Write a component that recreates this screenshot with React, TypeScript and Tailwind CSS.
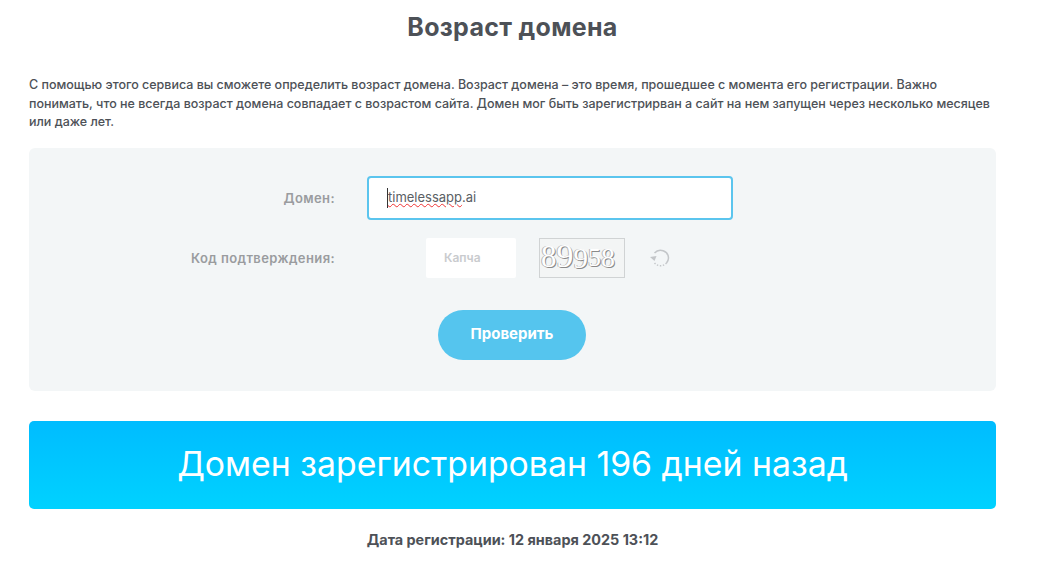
const digits = [
  { c: "8", cls: "text-[31px] -translate-y-[1px]" },
  { c: "9", cls: "text-[34px] -translate-y-[2px]" },
  { c: "9", cls: "text-[29px] translate-y-[1px]" },
  { c: "5", cls: "text-[26px]" },
  { c: "8", cls: "text-[28px]" },
];

export default function App() {
  return (
    <div className="h-[567px] w-[1038px] overflow-hidden bg-white pl-[29px] pr-[42px] font-['Inter',sans-serif] text-[#4d5157]">
      <h1 className="pt-[12px] text-center text-[25px] font-bold leading-[30px] tracking-[0.3px] text-[#4d5157]">Возраст домена</h1>
      <p className="mt-[34px] text-[12.5px] font-medium leading-[18.5px] tracking-[-0.012px]">
        С помощью этого сервиса вы сможете определить возраст домена. Возраст домена – это время, прошедшее с момента его регистрации. Важно<br />
        понимать, что не всегда возраст домена совпадает с возрастом сайта. Домен мог быть зарегистрирван а сайт на нем запущен через несколько месяцев<br />
        или даже лет.
      </p>
      <form className="mt-[16px] flex h-[243px] flex-col rounded-[6px] bg-[#f3f6f7] pt-[28px]">
        <div className="flex h-[45px] items-center">
          <label className="w-[306px] pt-[2px] text-right text-[13px] font-semibold tracking-[0.4px] text-[#9a9c9f]">Домен:</label>
          <div className="ml-[32px] flex h-[44px] w-[366px] items-center rounded-[4px] border-2 border-[#5bc5ee] bg-white pl-[18px] text-[13px] text-[#5a5e64]">
            <span className="border-l border-[#333]"><span className="underline decoration-wavy decoration-[#e33] decoration-1">timelessapp</span>.ai</span>
          </div>
        </div>
        <div className="mt-[17px] flex h-[40px] items-center">
          <label className="w-[306px] pt-[2px] text-right text-[13px] font-semibold tracking-[0.4px] text-[#9a9c9f]">Код подтверждения:</label>
          <div className="ml-[91px] flex h-[40px] w-[90px] items-center rounded-[2px] bg-white pl-[18px] text-[12px] font-semibold text-[#c9cbce]">Капча</div>
          <div className="ml-[23px] flex h-[40px] w-[86px] items-center overflow-hidden border border-[#d0d3d4] bg-[#f3f5f5] pl-[1px] font-['Liberation_Serif',serif] leading-none text-white [text-shadow:1px_1px_0_#8a8a8a,-1px_0_0_#b5b5b5]">
            {digits.map((d, i) => (
              <span key={i} className={`inline-block ${d.cls}`}>{d.c}</span>
            ))}
          </div>
          <svg className="ml-[24px]" width="22" height="22" viewBox="0 0 22 22" fill="none" stroke="#c3c6c9" strokeWidth="1.5">
            <path d="M5.5 6A8 8 0 0 1 19.5 11A8 8 0 0 1 17.5 16" />
            <path d="M1 10 L7.5 9 L5.5 14 Z" fill="#c3c6c9" stroke="none" />
            <path d="M17.5 16 A8 8 0 0 1 5.5 16" strokeDasharray="1.4 1.6" />
          </svg>
        </div>
        <button type="button" className="ml-[409px] mt-[32px] h-[50px] w-[148px] rounded-[25px] bg-[#55c5ee] text-[15px] font-bold text-white">Проверить</button>
      </form>
      <div className="mt-[30px] flex h-[88px] items-center justify-center rounded-[5px] bg-gradient-to-b from-[#00bcff] to-[#00d2ff] text-[33.8px] font-normal text-white">
        Домен зарегистрирован 196 дней назад
      </div>
      <p className="mt-[22px] text-center text-[14.4px] font-bold leading-[18px]">Дата регистрации: 12 января 2025 13:12</p>
    </div>
  );
}
